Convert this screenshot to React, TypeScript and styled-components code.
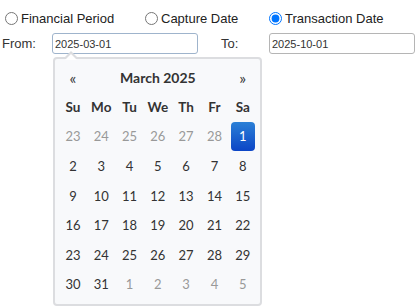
import React, { useState } from "react";
import styled, { createGlobalStyle } from "styled-components";

const GlobalStyle = createGlobalStyle`
  body {
    margin: 0;
    background: #ffffff;
    font-family: "Liberation Sans", Arial, sans-serif;
    color: #222;
  }
`;

const Page = styled.div`
  position: relative;
  width: 417px;
  height: 307px;
  overflow: hidden;
`;

const RadioRow = styled.div`
  display: flex;
  align-items: center;
  height: 20px;
  margin-top: 8px;
`;

const RadioLabel = styled.label<{ width: number }>`
  display: flex;
  align-items: center;
  width: ${(p) => p.width}px;
  font-size: 13px;
  color: #222;

  input {
    margin: 0 3px 0 5px;
    width: 13px;
    height: 13px;
  }
`;

const FieldRow = styled.div`
  display: flex;
  align-items: center;
  margin-top: 5px;
  height: 21px;
`;

const FieldLabel = styled.span<{ width: number; indent?: number }>`
  width: ${(p) => p.width}px;
  padding-left: ${(p) => p.indent ?? 0}px;
  box-sizing: border-box;
  font-size: 13px;
  color: #333;
`;

const DateInput = styled.input<{ focused?: boolean }>`
  box-sizing: border-box;
  width: 146px;
  height: 21px;
  padding: 0 2px;
  border: 1px solid ${(p) => (p.focused ? "#9fb4cc" : "#b5b5b5")};
  border-radius: 3px;
  font-family: "Liberation Sans", Arial, sans-serif;
  font-size: 11px;
  color: #333;
  background: #fff;
  outline: none;
`;

const Spacer = styled.div<{ width: number }>`
  width: ${(p) => p.width}px;
`;

const Popup = styled.div`
  position: absolute;
  left: 53px;
  top: 57px;
  width: 209px;
  height: 249px;
  box-sizing: border-box;
  border: 2px solid #dcdde0;
  border-radius: 4px;
  background: #f8f9fb;
  padding: 3px 4px 0 3px;
  font-family: Lato, "Noto Sans", sans-serif;

  &::before,
  &::after {
    content: "";
    position: absolute;
    left: 9px;
    border-left: 7px solid transparent;
    border-right: 7px solid transparent;
  }
  &::before {
    top: -8px;
    border-bottom: 7px solid #dcdde0;
  }
  &::after {
    top: -5px;
    left: 10px;
    border-left-width: 6px;
    border-right-width: 6px;
    border-bottom: 6px solid #ffffff;
  }
`;

const Grid = styled.div`
  display: grid;
  grid-template-columns: repeat(7, 28.3px);
  grid-auto-rows: 29.6px;
  padding-left: 0.8px;
`;

const Header = styled(Grid)`
  grid-auto-rows: 30px;
`;

const NavArrow = styled.span`
  display: flex;
  align-items: center;
  justify-content: center;
  font-size: 16px;
  color: #333;
`;

const Title = styled.span`
  grid-column: span 5;
  display: flex;
  align-items: center;
  justify-content: center;
  font-weight: 700;
  font-size: 14px;
  color: #333;
`;

const DayName = styled.span`
  display: flex;
  align-items: center;
  justify-content: center;
  font-weight: 700;
  font-size: 13.5px;
  color: #333;
`;

const Day = styled.span<{ muted?: boolean; selected?: boolean }>`
  display: flex;
  align-items: center;
  justify-content: center;
  margin: 0 ${(p) => (p.selected ? "2px 0 2px" : "0")};
  border-radius: 4px;
  font-size: 13px;
  color: ${(p) => (p.selected ? "#fff" : p.muted ? "#999" : "#333")};
  background: ${(p) =>
    p.selected ? "linear-gradient(to bottom, #2b80d6, #0c45c6)" : "transparent"};
`;

const dayNames = ["Su", "Mo", "Tu", "We", "Th", "Fr", "Sa"];

const buildDays = () => {
  const cells: { n: number; muted: boolean; selected: boolean }[] = [];
  for (let d = 23; d <= 28; d++) cells.push({ n: d, muted: true, selected: false });
  for (let d = 1; d <= 31; d++) cells.push({ n: d, muted: false, selected: d === 1 });
  for (let d = 1; d <= 5; d++) cells.push({ n: d, muted: true, selected: false });
  return cells;
};

const App = () => {
  const [mode, setMode] = useState("transaction");
  const days = buildDays();

  return (
    <Page>
      <GlobalStyle />
      <RadioRow>
        <RadioLabel width={140}>
          <input type="radio" checked={mode === "financial"} onChange={() => setMode("financial")} />
          Financial Period
        </RadioLabel>
        <RadioLabel width={124}>
          <input type="radio" checked={mode === "capture"} onChange={() => setMode("capture")} />
          Capture Date
        </RadioLabel>
        <RadioLabel width={150}>
          <input type="radio" checked={mode === "transaction"} onChange={() => setMode("transaction")} />
          Transaction Date
        </RadioLabel>
      </RadioRow>

      <FieldRow>
        <FieldLabel width={52} indent={2}>From:</FieldLabel>
        <DateInput focused defaultValue="2025-03-01" />
        <Spacer width={23} />
        <FieldLabel width={48}>To:</FieldLabel>
        <DateInput defaultValue="2025-10-01" />
      </FieldRow>

      <Popup>
        <Header>
          <NavArrow>«</NavArrow>
          <Title>March 2025</Title>
          <NavArrow>»</NavArrow>
        </Header>
        <Grid>
          {dayNames.map((d) => (
            <DayName key={d}>{d}</DayName>
          ))}
          {days.map((c, i) => (
            <Day key={i} muted={c.muted} selected={c.selected}>
              {c.n}
            </Day>
          ))}
        </Grid>
      </Popup>
    </Page>
  );
};

export default App;
